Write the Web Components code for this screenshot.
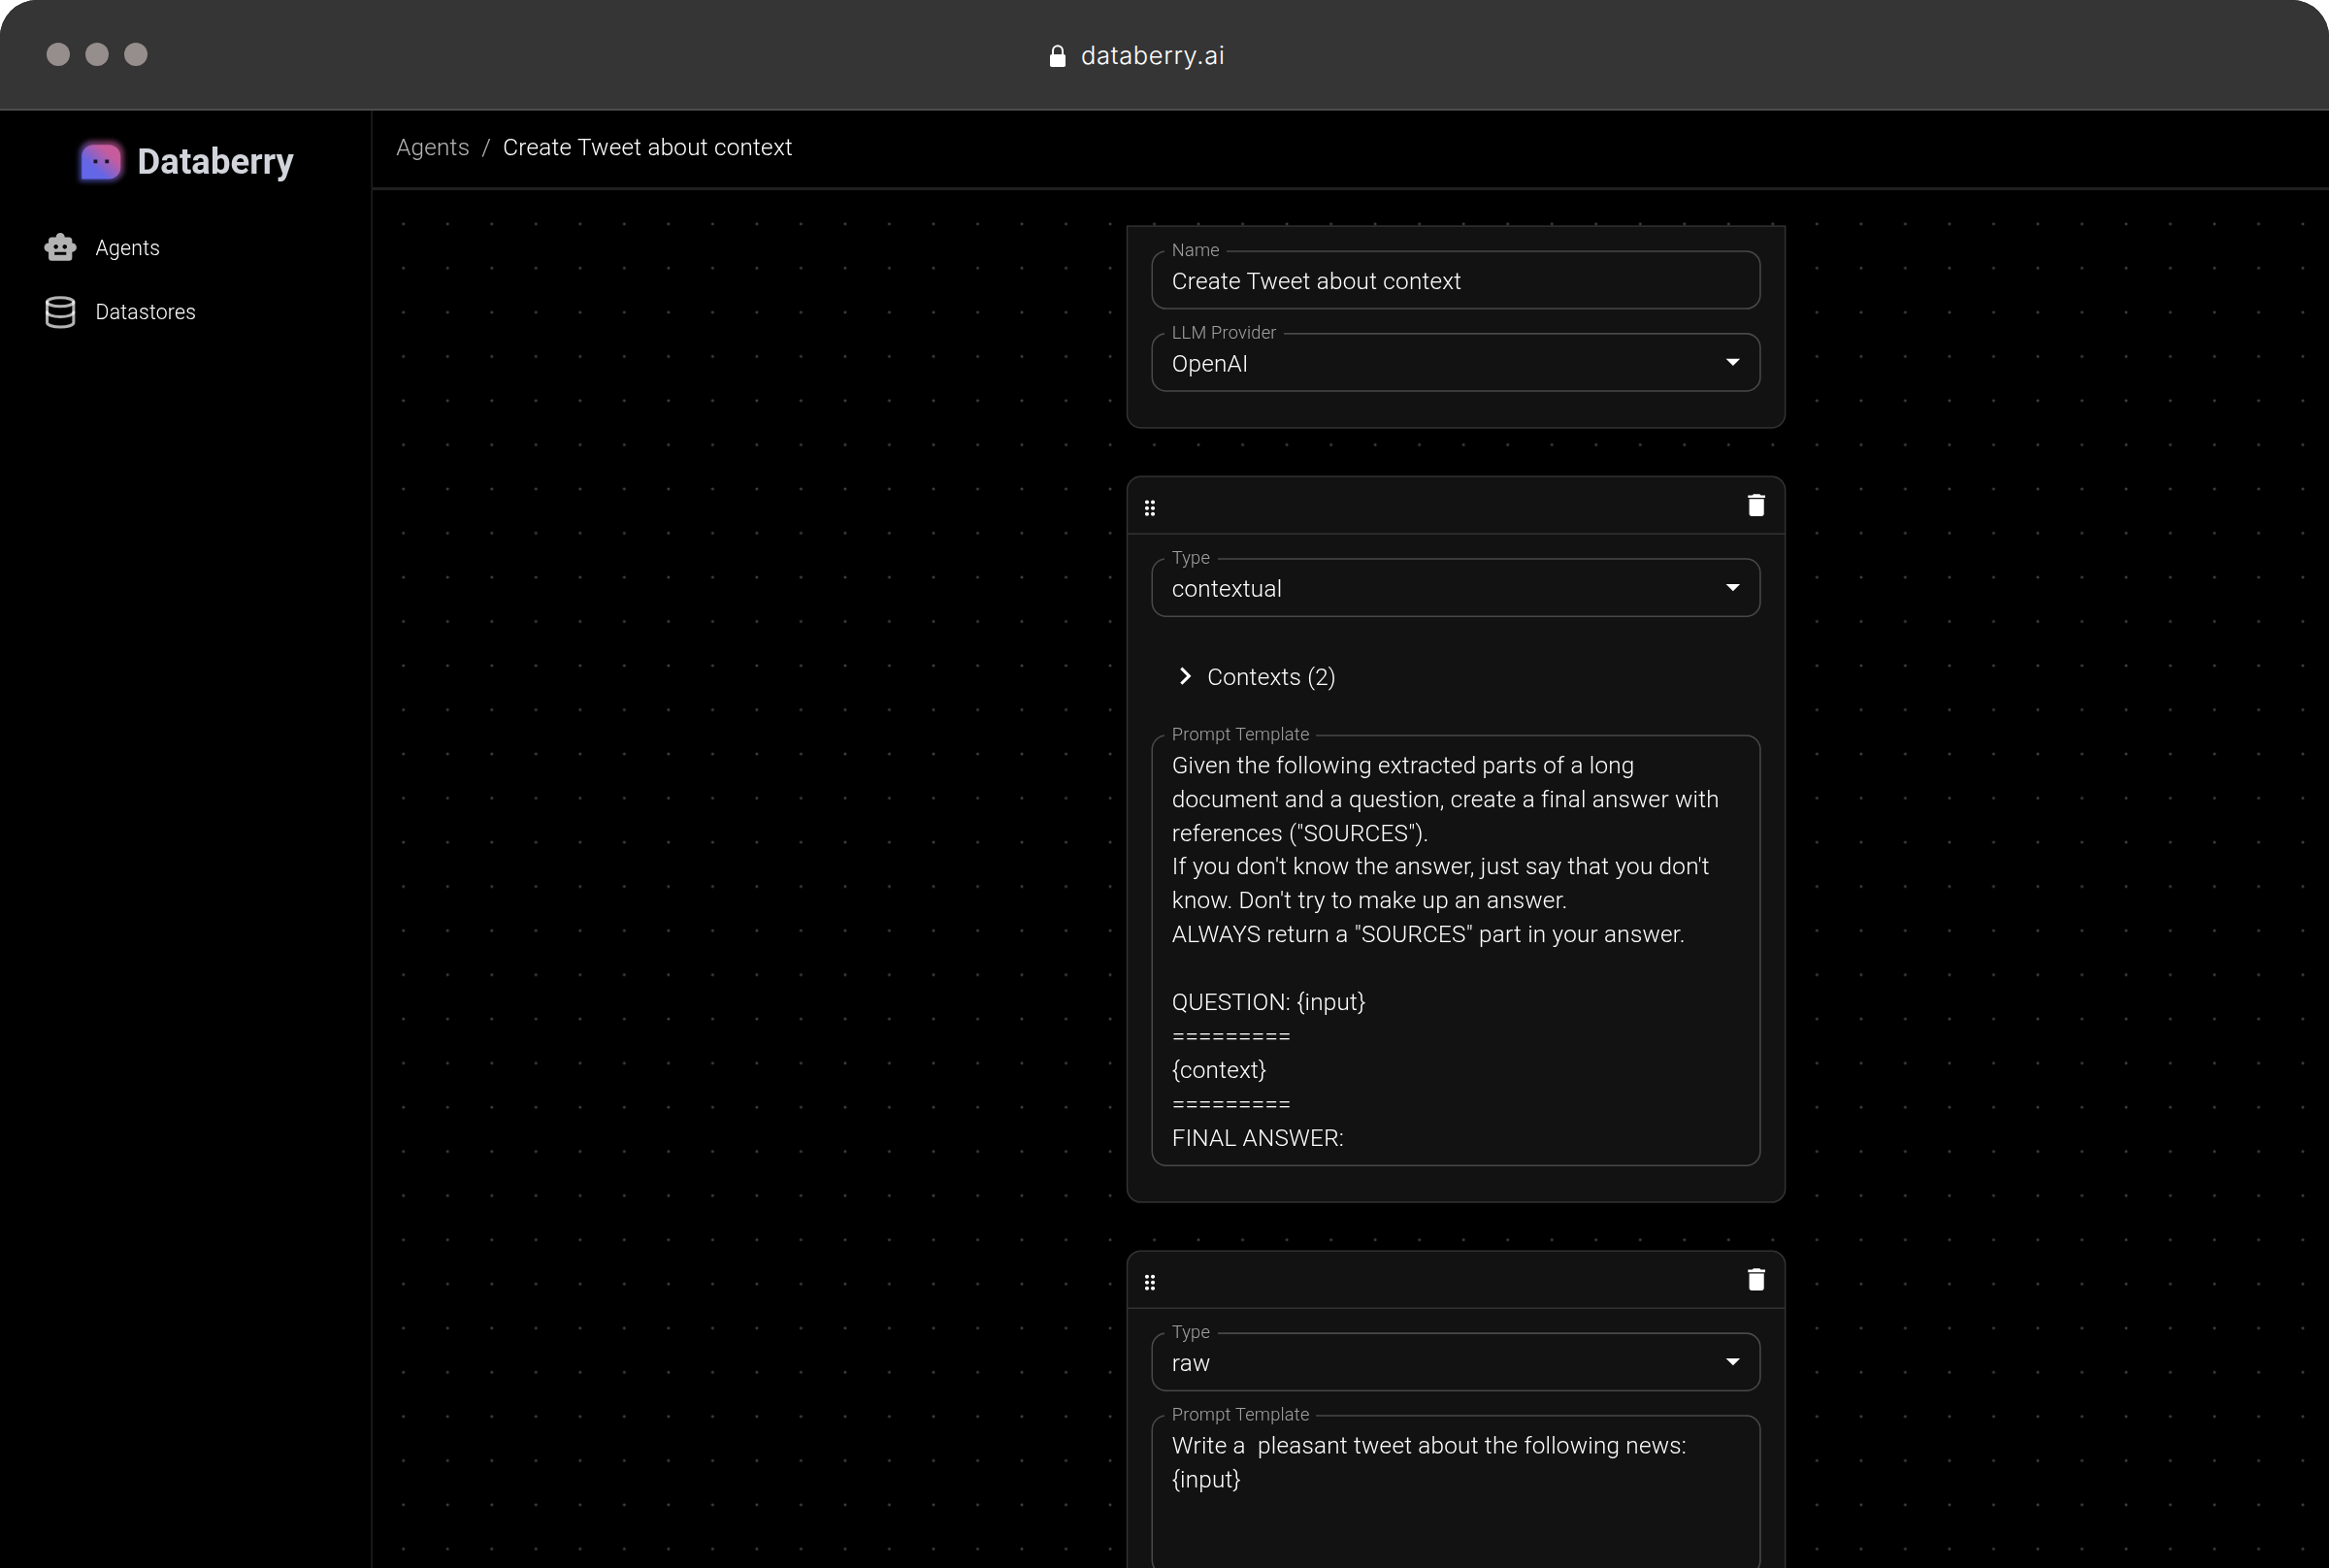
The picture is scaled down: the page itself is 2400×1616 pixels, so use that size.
<!DOCTYPE html>
<html lang="en">
<head>
<meta charset="utf-8">
<title>Databerry</title>
<style>
  html, body { margin: 0; background: #fff; }
  body { width: 2400px; height: 1616px; overflow: hidden; font-family: Roboto, "Liberation Sans", sans-serif; }
</style>
</head>
<body>
<browser-window url="databerry.ai">
  <app-shell>
    <side-nav slot="nav">
      <nav-item icon="agent">Agents</nav-item>
      <nav-item icon="store">Datastores</nav-item>
    </side-nav>
    <bread-crumbs slot="header"><span slot="parent">Agents</span>Create Tweet about context</bread-crumbs>
    <flow-card plain>
      <form-field label="Name">Create Tweet about context</form-field>
      <form-field label="LLM Provider" select>OpenAI</form-field>
    </flow-card>
    <flow-card>
      <form-field label="Type" select>contextual</form-field>
      <fold-row>Contexts (2)</fold-row>
      <form-field label="Prompt Template" rows="12">Given the following extracted parts of a long document and a question, create a final answer with references ("SOURCES").
If you don't know the answer, just say that you don't know. Don't try to make up an answer.
ALWAYS return a "SOURCES" part in your answer.

QUESTION: {input}
=========
{context}
=========
FINAL ANSWER:</form-field>
    </flow-card>
    <flow-card>
      <form-field label="Type" select>raw</form-field>
      <form-field label="Prompt Template" rows="4">Write a  pleasant tweet about the following news:
{input}</form-field>
    </flow-card>
  </app-shell>
</browser-window>

<script>
const ICONS = {
  agent: '<path d="M20 9V7c0-1.1-.9-2-2-2h-3c0-1.66-1.34-3-3-3S9 3.34 9 5H6c-1.1 0-2 .9-2 2v2c-1.66 0-3 1.34-3 3s1.34 3 3 3v4c0 1.1.9 2 2 2h12c1.1 0 2-.9 2-2v-4c1.66 0 3-1.34 3-3s-1.34-3-3-3zM7.5 11.500c0-.83.67-1.500 1.500-1.500s1.500.67 1.500 1.500S9.830 13 9 13s-1.500-.67-1.500-1.500zM16 17H8v-2h8v2zm-1-4c-.83 0-1.500-.67-1.500-1.500S14.170 10 15 10s1.500.67 1.500 1.500S15.830 13 15 13z"/>',
  store: '<g fill="none" stroke="currentColor" stroke-width="2" stroke-linecap="round" stroke-linejoin="round"><ellipse cx="12" cy="5" rx="9" ry="3"/><path d="M21 12c0 1.660-4 3-9 3s-9-1.340-9-3"/><path d="M3 5v14c0 1.660 4 3 9 3s9-1.340 9-3V5"/></g>',
  drag: '<path d="M11 18c0 1.100-.9 2-2 2s-2-.9-2-2 .9-2 2-2 2 .9 2 2zm-2-8c-1.100 0-2 .9-2 2s.9 2 2 2 2-.9 2-2-.9-2-2-2zm0-6c-1.100 0-2 .9-2 2s.9 2 2 2 2-.9 2-2-.9-2-2-2zm6 4c1.100 0 2-.9 2-2s-.9-2-2-2-2 .9-2 2 .9 2 2 2zm0 2c-1.100 0-2 .9-2 2s.9 2 2 2 2-.9 2-2-.9-2-2-2zm0 6c-1.100 0-2 .9-2 2s.9 2 2 2 2-.9 2-2-.9-2-2-2z"/>',
  trash: '<path d="M6 19c0 1.100.9 2 2 2h8c1.100 0 2-.9 2-2V7H6v12zM19 4h-3.500l-1-1h-5l-1 1H5v2h14V4z"/>',
  chevron: '<path d="M10 6 8.590 7.410 13.170 12l-4.580 4.590L10 18l6-6z"/>',
  caret: '<path d="m7 10 5 5 5-5z"/>'
};
const icon = (name, size = 24) =>
  `<svg viewBox="0 0 24 24" width="${size}" height="${size}" fill="currentColor" aria-hidden="true">${ICONS[name]}</svg>`;

const define = (tag, render) => customElements.define(tag, class extends HTMLElement {
  constructor() {
    super();
    this.attachShadow({ mode: 'open' });
  }
  connectedCallback() {
    this.shadowRoot.innerHTML = render(this);
  }
});

define('browser-window', el => `
  <style>
    :host { display: flex; flex-direction: column; width: 2400px; height: 1616px; background: #000;
      border-radius: 38px 38px 0 0; overflow: hidden; }
    header { flex: none; box-sizing: border-box; height: 114px; display: flex; align-items: center;
      background: #353535; border-bottom: 2px solid #4b4b4b; }
    .dots { display: flex; gap: 16px; padding-left: 48px; width: 1034px; }
    .dots i { width: 24px; height: 24px; border-radius: 50%; background: #968e8c; }
    .url { display: flex; align-items: center; gap: 16px; color: #fff;
      font: 350 25.500px/32px Inter, sans-serif; letter-spacing: .67px; }
    .url svg { display: block; margin-top: 3px; }
    .url span { padding-top: 2px; }
    main { flex: 1; min-height: 0; overflow: hidden; }
  </style>
  <header>
    <div class="dots"><i></i><i></i><i></i></div>
    <div class="url">
      <svg width="16" height="24" viewBox="0 0 16 24"><rect y="10" width="16" height="13" rx="1.800" fill="#fff"/><path d="M3 11V6.200a5 5 0 0 1 10 0V11" fill="none" stroke="#fff" stroke-width="2"/></svg>
      <span>${el.getAttribute('url')}</span>
    </div>
  </header>
  <main><slot></slot></main>`);

define('app-shell', () => `
  <style>
    :host { display: flex; width: 1582px; height: 990.100px; color: #fff; font-weight: 300;
      font-size: 16px; letter-spacing: .00938em; transform: scale(1.5173); transform-origin: 0 0; }
    aside { flex: none; box-sizing: border-box; width: 253px; border-right: 1px solid rgba(255,255,255,.12); }
    section { flex: 1; min-width: 0; display: flex; flex-direction: column; }
    .top { flex: none; box-sizing: border-box; height: 54px; padding: 12.500px 16px 0; border-bottom: 2px solid rgba(255,255,255,.12); }
    .canvas { flex: 1; min-height: 0; overflow: hidden; padding: 24px 0 0 512px;
      display: flex; flex-direction: column; align-items: flex-start; gap: 32px;
      background: radial-gradient(circle at 15px 15px, #404040 .8px, transparent 1.150px) 6px 8px / 30px 30px; }
  </style>
  <aside><slot name="nav"></slot></aside>
  <section>
    <div class="top"><slot name="header"></slot></div>
    <div class="canvas"><slot></slot></div>
  </section>`);

define('side-nav', () => `
  <style>
    :host { display: flex; flex-direction: column; }
    .brand { display: flex; align-items: center; justify-content: flex-start; height: 46px; padding: 12px 0 13px 47.300px; gap: 2px; }
    .brand svg { display: block; overflow: visible; }
    .brand b { padding-top: .4px; font-weight: 700; font-size: 24px; line-height: 32px; letter-spacing: .06px; color: #d1d5db; }
    nav { display: flex; flex-direction: column; }
  </style>
  <div class="brand">
    <svg width="44" height="40" viewBox="0 0 44 40">
      <defs>
        <linearGradient id="g" x1="0.100" y1="0.850" x2="0.850" y2="0.100">
          <stop offset="0.250" stop-color="#6366e6"/><stop offset="0.800" stop-color="#c75c9c"/>
        </linearGradient>
        <filter id="b" x="-40%" y="-40%" width="180%" height="180%"><feGaussianBlur stdDeviation="1.600"/></filter>
      </defs>
      <path d="M6.800 33.300V14.500a9 9 0 0 1 9-9h12.300a9 9 0 0 1 9 9v9.800a9 9 0 0 1-9 9H6.800z" fill="url(#g)" opacity=".6" filter="url(#b)"/>
      <path d="M8.500 31.500V16.200a8 8 0 0 1 8-8h10.400a8 8 0 0 1 8 8v7.300a8 8 0 0 1-8 8z" fill="url(#g)"/>
      <path d="M16.600 18.300h2.500v2.500h-2.500zM24.400 18.300h2.500v2.500h-2.500z" fill="#17152a"/>
    </svg>
    <b>Databerry</b>
  </div>
  <nav><slot></slot></nav>`);

define('nav-item', el => `
  <style>
    :host { display: flex; align-items: center; gap: 12px; height: 44px; padding-left: 29px;
      font-size: 14px; letter-spacing: .00938em; line-height: 20px; }
    svg { display: block; color: rgba(255,255,255,.7); }
  </style>
  ${icon(el.getAttribute('icon'))}<span><slot></slot></span>`);

define('bread-crumbs', () => `
  <style>
    :host { display: flex; gap: 8px; line-height: 24px; }
    .muted { color: rgba(255,255,255,.7); }
  </style>
  <span class="muted"><slot name="parent"></slot></span><span class="muted">/</span><span><slot></slot></span>`);

define('flow-card', el => `
  <style>
    :host { flex: none; display: flex; flex-direction: column; box-sizing: border-box; width: 448px;
      background: #121212; border: 1px solid rgba(255,255,255,.14); border-radius: 10px; }
    :host([plain]) { border-radius: 0 0 10px 10px; }
    .bar { display: flex; justify-content: space-between; align-items: center; height: 38px;
      padding: 0 9px 0 7px; border-bottom: 1px solid rgba(255,255,255,.14); }
    .bar svg { display: block; }
    .bar svg:first-child { margin-top: 4px; }
    .body { display: flex; flex-direction: column; gap: 16px; padding: 16px 16px 24px; }
  </style>
  ${el.hasAttribute('plain') ? '' : `<div class="bar">${icon('drag', 16)}${icon('trash', 20)}</div>`}
  <div class="body"><slot></slot></div>`);

define('form-field', el => `
  <style>
    :host { display: block; }
    fieldset { margin: -5px 0 0; padding: 0; min-width: 0; border: 1px solid rgba(255,255,255,.23); border-radius: 10px; }
    legend { margin-left: 8px; padding: 0 5px; height: 11px; font-size: 12px; line-height: 11px; color: rgba(255,255,255,.6); }
    .row { display: flex; align-items: center; padding: 2.500px 6.300px 7.500px 13px; }
    .text { width: 386px; flex: none; min-height: calc(23px * var(--rows)); line-height: 23px; white-space: pre-wrap; }
    .select .text { width: 366px; }
    svg { display: block; margin: -.5px 0 0 auto; height: 23px; }
  </style>
  <fieldset style="--rows:${el.getAttribute('rows') || 1}" class="${el.hasAttribute('select') ? 'select' : ''}">
    <legend>${el.getAttribute('label')}</legend>
    <div class="row"><div class="text"><slot></slot></div>${el.hasAttribute('select') ? icon('caret') : ''}</div>
  </fieldset>`);

define('fold-row', () => `
  <style>
    :host { display: flex; align-items: center; gap: 3px; height: 48px; padding-left: 11px; line-height: 24px; }
    svg { display: block; }
    span { padding-top: 1px; }
  </style>
  ${icon('chevron')}<span><slot></slot></span>`);
</script>
</body>
</html>
